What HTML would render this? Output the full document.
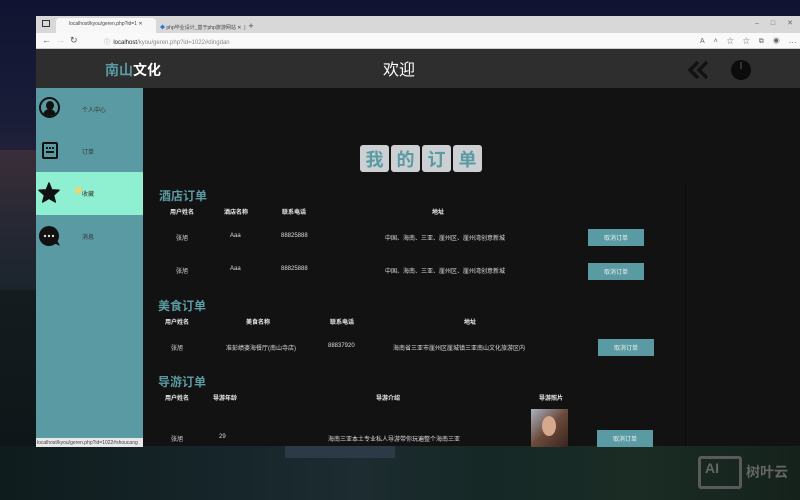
<!DOCTYPE html>
<html><head><meta charset="utf-8"><style>
*{margin:0;padding:0;box-sizing:border-box}
body{width:800px;height:500px;overflow:hidden;position:relative;font-family:"Liberation Sans","Noto Sans CJK SC",sans-serif;background:#15182a}
.a{position:absolute}
.t{position:absolute;font-size:6px;color:#ddd;white-space:nowrap}
.h{position:absolute;font-size:6px;color:#eee;font-weight:bold;white-space:nowrap}
.sec{position:absolute;font-size:12px;color:#5a9ba3;font-weight:bold}
.btn{position:absolute;width:56px;height:17px;background:#5a9ba3;color:#eee;font-size:6px;display:flex;align-items:center;justify-content:center}
.tile{position:absolute;top:145px;width:29px;height:27px;background:#cdd0d3;border-radius:3px;color:#5a9ba3;font-size:18px;font-weight:bold;display:flex;align-items:center;justify-content:center}
.nav{position:absolute;left:36px;width:107px;height:43px}
.nav span{position:absolute;left:46px;top:17px;font-size:6px;color:#333}
</style></head><body>
<div class="a" style="left:0;top:0;width:800px;height:200px;background:linear-gradient(#101432,#1a1d38 60%,#2a2638)"></div>
<div class="a" style="left:0;top:150px;width:36px;height:150px;background:linear-gradient(#3a2e38,#262833 50%,#1a242c)"></div>
<div class="a" style="left:0;top:290px;width:36px;height:210px;background:linear-gradient(#141c20,#0c1416)"></div>
<div class="a" style="left:0;top:446px;width:800px;height:54px;background:linear-gradient(90deg,#0f1c1e,#16262a 30%,#1c2c30 45%,#162826 60%,#1a2c24 80%,#15221c)"></div>
<div class="a" style="left:285px;top:446px;width:110px;height:12px;background:#2c3a48"></div>
<div class="a" style="left:698px;top:456px;width:44px;height:33px;border:3px solid #5a5a5a;border-radius:3px;color:#666;font-weight:bold;font-size:14px;padding-left:4px;line-height:18px">AI</div>
<div class="a" style="left:746px;top:462px;color:#666;font-size:14px;font-weight:bold">树叶云</div>
<div class="a" style="left:36px;top:16px;width:764px;height:17px;background:#d8d8d8"></div>
<div class="a" style="left:56px;top:18px;width:100px;height:15px;background:#f7f7f7;border-radius:4px 4px 0 0"></div>
<div class="t" style="left:69px;top:21px;color:#444;font-size:5px">localhost/kyou/geren.php?id=1 ✕</div>
<div class="t" style="left:160px;top:21px;color:#444;font-size:5px"><span style="color:#3b6fd8">◆</span> php毕业设计_基于php旅游网站 ✕ &nbsp;|&nbsp; <span style="font-size:9px">+</span></div>
<div class="a" style="left:42px;top:20px;width:8px;height:7px;border:1px solid #333"></div>
<div class="a" style="left:36px;top:33px;width:764px;height:16px;background:#f9f9f9;border-bottom:1px solid #ccc"></div>
<div class="t" style="left:42px;top:35px;color:#555;font-size:9px">←&nbsp;&nbsp;<span style="color:#ccc">→</span>&nbsp;&nbsp;↻</div>
<div class="t" style="left:104px;top:37px;color:#888;font-size:6px">ⓘ&nbsp; <span style="color:#222">localhost</span>/kyou/geren.php?id=1022#dingdan</div>
<div class="t" style="left:700px;top:36px;color:#666;font-size:7px;letter-spacing:9px">A˄☆☆⧉◉⋯</div>
<div class="t" style="left:755px;top:19px;color:#666;font-size:7px;letter-spacing:12px">–□✕</div>
<div class="a" style="left:36px;top:49px;width:764px;height:39px;background:#2e2e2e"></div>
<div class="a" style="left:105px;top:60px;font-size:14px;font-weight:bold;color:#5a9ba3">南山<span style="color:#fff">文化</span></div>
<div class="a" style="left:383px;top:56px;font-size:16px;color:#fff">欢迎</div>
<svg class="a" style="left:688px;top:61px" width="22" height="18" viewBox="0 0 22 18"><path d="M10 1 L2 9 L10 17 M19 1 L11 9 L19 17" fill="none" stroke="#121212" stroke-width="3.5"/></svg>
<svg class="a" style="left:731px;top:60px" width="20" height="20" viewBox="0 0 20 20"><circle cx="10" cy="10" r="10" fill="#0c0c0c"/><path d="M10 2 V9" stroke="#333" stroke-width="2"/></svg>
<div class="a" style="left:36px;top:88px;width:107px;height:358px;background:#5a9ba3"></div>
<div class="nav" style="top:88px"><span>个人中心</span></div>
<div class="a" style="left:39px;top:97px;width:21px;height:21px;border-radius:50%;border:2px solid #111;overflow:hidden"><div class="a" style="left:5px;top:2px;width:8px;height:9px;border-radius:50%;background:#111"></div><div class="a" style="left:2px;top:10px;width:13px;height:8px;border-radius:7px 7px 0 0;background:#111"></div></div>
<div class="nav" style="top:130px"><span>订单</span></div>
<div class="a" style="left:42px;top:142px;width:16px;height:17px;border:2px solid #111;border-radius:2px"><div class="a" style="left:2px;top:3px;width:8px;height:2px;border-top:2px dotted #111"></div><div class="a" style="left:2px;top:7px;width:8px;height:2px;background:#111"></div></div>
<div class="nav" style="top:172px;background:#8ef0d0"><span>收藏</span></div>
<svg class="a" style="left:38px;top:182px" width="22" height="21" viewBox="0 0 24 23"><path d="M12 1 L15 8.5 L23 9 L17 14.5 L19 22 L12 18 L5 22 L7 14.5 L1 9 L9 8.5 Z" fill="#111" stroke="#111" stroke-linejoin="round" stroke-width="1.5"/></svg>
<div class="a" style="left:75px;top:187px;width:7px;height:7px;border-radius:50%;background:#e8d77a"></div>
<div class="nav" style="top:215px"><span>消息</span></div>
<svg class="a" style="left:39px;top:226px" width="22" height="21" viewBox="0 0 22 21"><circle cx="10" cy="10" r="10" fill="#111"/><path d="M15 17 L21 20 L18 14 Z" fill="#111"/><circle cx="6" cy="10" r="1.2" fill="#ddd"/><circle cx="10" cy="10" r="1.2" fill="#ddd"/><circle cx="14" cy="10" r="1.2" fill="#ddd"/></svg>
<div class="a" style="left:143px;top:88px;width:657px;height:358px;background:#121212"></div>
<div class="a" style="left:685px;top:185px;width:1px;height:261px;background:#0a0a0a"></div>
<div class="tile" style="left:360px">我</div><div class="tile" style="left:391px">的</div><div class="tile" style="left:422px">订</div><div class="tile" style="left:453px">单</div>
<div class="sec" style="left:159px;top:187px">酒店订单</div>
<div class="h" style="left:170px;top:207px">用户姓名</div><div class="h" style="left:224px;top:207px">酒店名称</div><div class="h" style="left:282px;top:207px">联系电话</div><div class="h" style="left:432px;top:207px">地址</div>
<div class="t" style="left:176px;top:233px">张旭</div><div class="t" style="left:230px;top:233px">Aaa</div><div class="t" style="left:281px;top:233px">88825888</div><div class="t" style="left:385px;top:233px">中国、海南、三亚、崖州区、崖州湾创意新城</div>
<div class="btn" style="left:588px;top:229px">取消订单</div>
<div class="t" style="left:176px;top:266px">张旭</div><div class="t" style="left:230px;top:266px">Aaa</div><div class="t" style="left:281px;top:266px">88825888</div><div class="t" style="left:385px;top:266px">中国、海南、三亚、崖州区、崖州湾创意新城</div>
<div class="btn" style="left:588px;top:263px">取消订单</div>
<div class="sec" style="left:158px;top:297px">美食订单</div>
<div class="h" style="left:165px;top:317px">用户姓名</div><div class="h" style="left:246px;top:317px">美食名称</div><div class="h" style="left:330px;top:317px">联系电话</div><div class="h" style="left:464px;top:317px">地址</div>
<div class="t" style="left:171px;top:343px">张旭</div><div class="t" style="left:226px;top:343px">准彭绩婆海餐厅(南山寺店)</div><div class="t" style="left:328px;top:343px">88837920</div><div class="t" style="left:393px;top:343px">海南省三亚市崖州区崖城镇三亚南山文化旅游区内</div>
<div class="btn" style="left:598px;top:339px">取消订单</div>
<div class="sec" style="left:158px;top:373px">导游订单</div>
<div class="h" style="left:165px;top:393px">用户姓名</div><div class="h" style="left:213px;top:393px">导游年龄</div><div class="h" style="left:376px;top:393px">导游介绍</div><div class="h" style="left:539px;top:393px">导游照片</div>
<div class="t" style="left:171px;top:434px">张旭</div><div class="t" style="left:219px;top:434px">29</div><div class="t" style="left:328px;top:434px">海南三亚本土专业私人导游带你玩遍整个海南三亚</div>
<div class="a" style="left:531px;top:409px;width:37px;height:38px;background:linear-gradient(135deg,#aab4c4,#6a4a3a 50%,#3a2420)"></div>
<div class="a" style="left:542px;top:416px;width:14px;height:20px;border-radius:50%;background:#d6a88e"></div>
<div class="btn" style="left:597px;top:430px">取消订单</div>
<div class="a" style="left:36px;top:438px;width:107px;height:9px;background:#e8e8e8;color:#444;font-size:5px;display:flex;align-items:center;padding-left:1px;white-space:nowrap;overflow:hidden">localhost/kyou/geren.php?id=1022#shoucang</div>
</body></html>
